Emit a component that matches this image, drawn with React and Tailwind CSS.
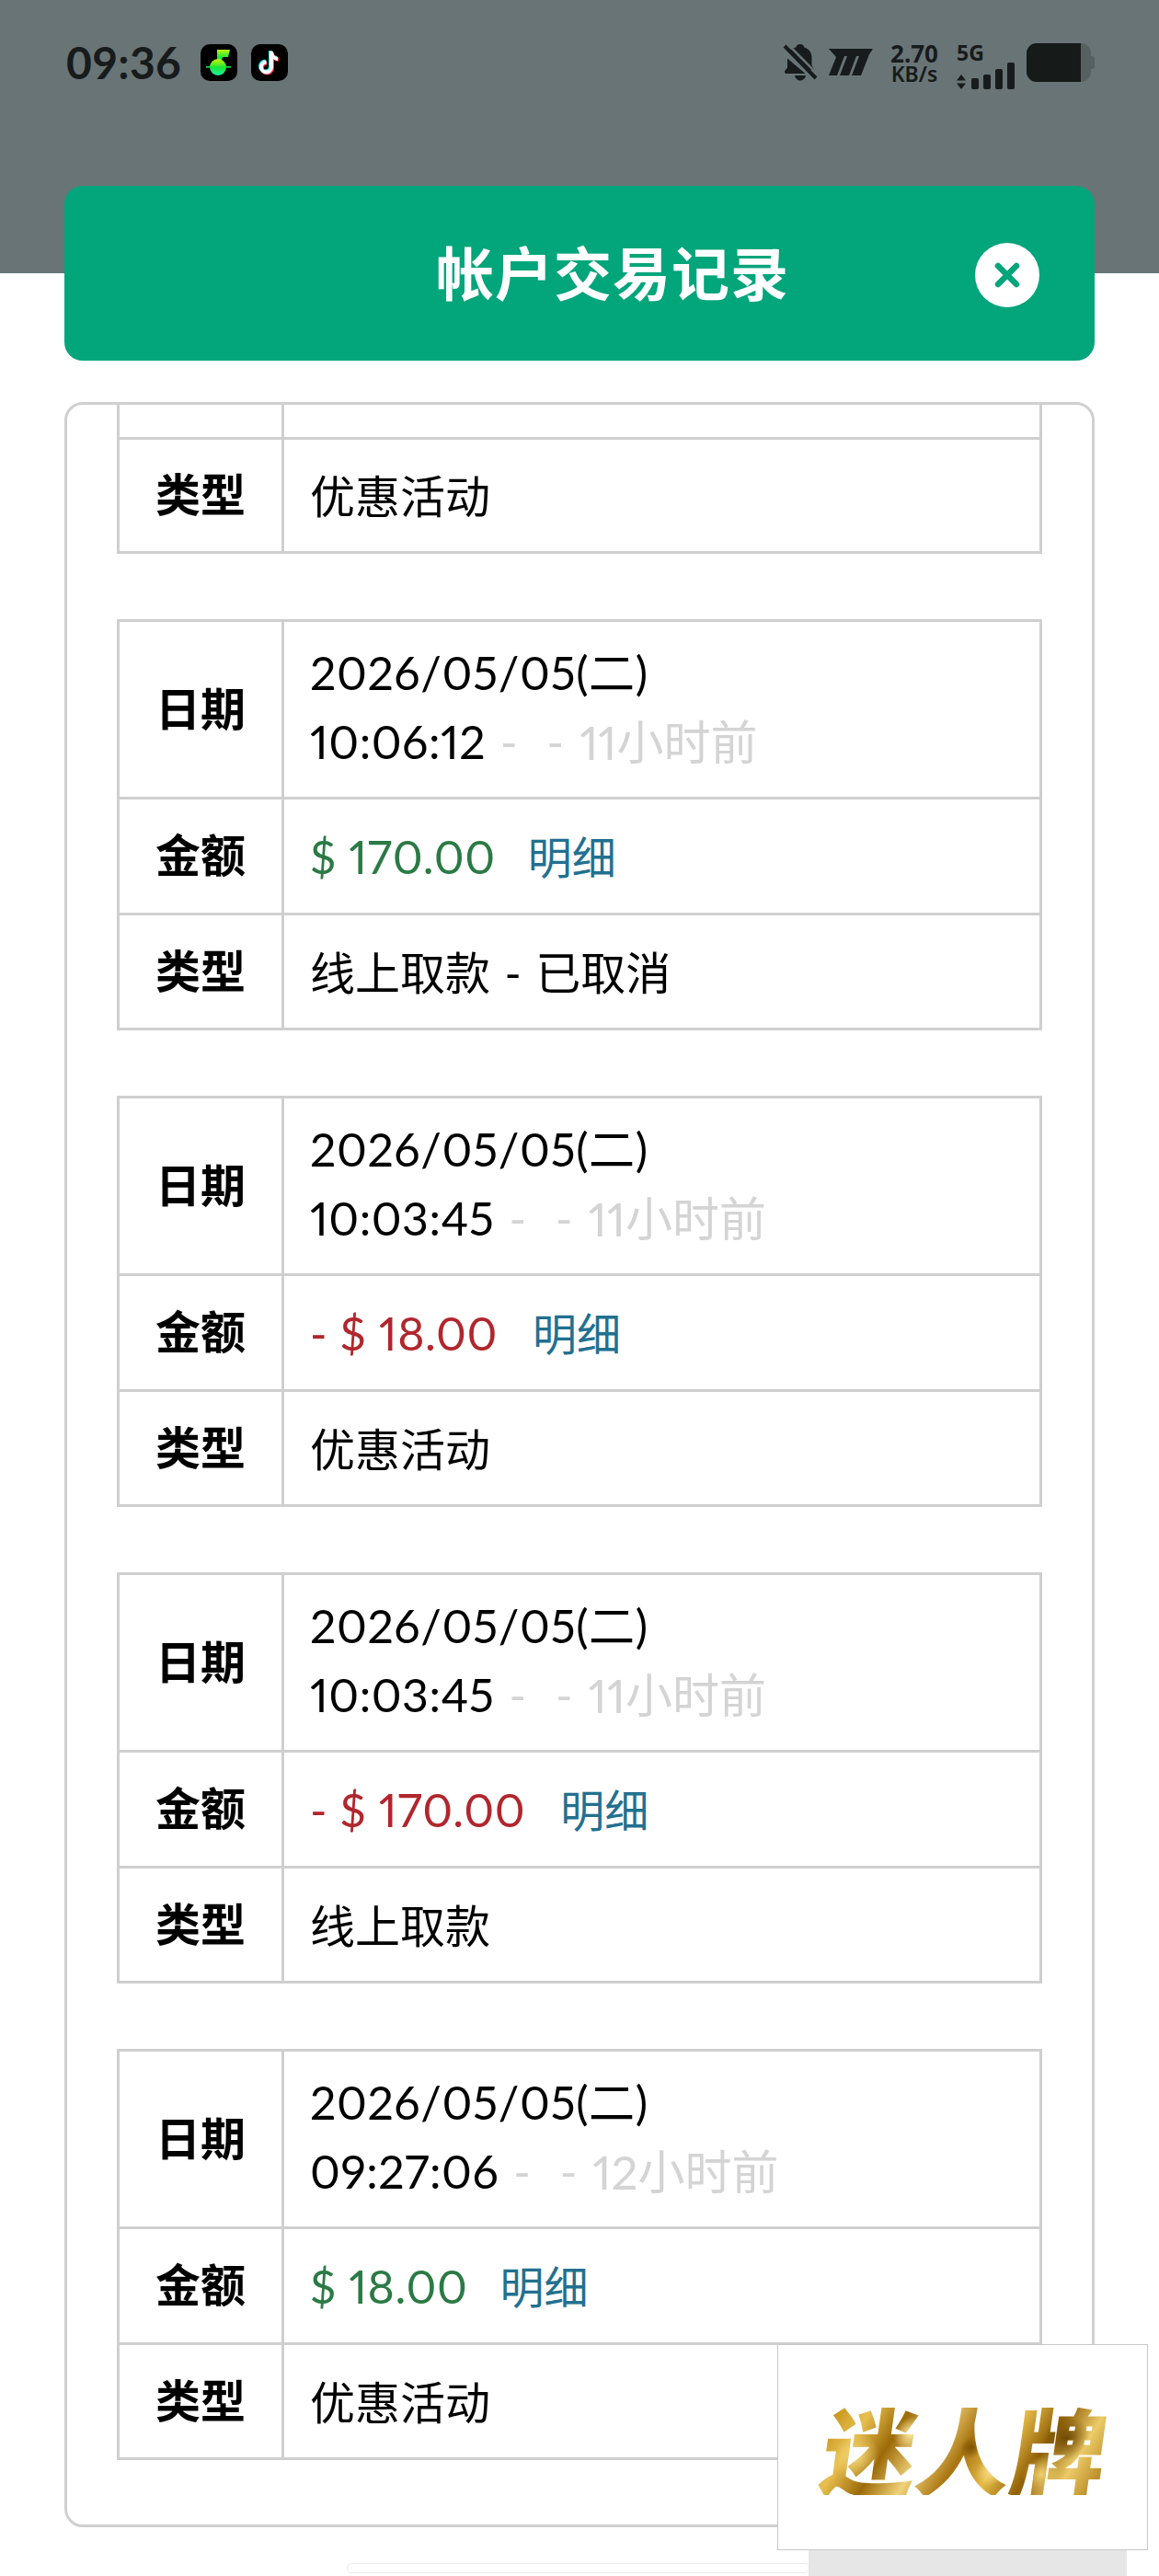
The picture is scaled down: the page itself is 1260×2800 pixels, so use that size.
import React from 'react';

const FONT = "font-['Lato','Noto_Sans_CJK_SC',sans-serif]";

const records = [
  { date: '2026/05/05(二)', time: '10:06:12', ago: '11小时前', amount: '$ 170.00', positive: true, type: '线上取款 - 已取消' },
  { date: '2026/05/05(二)', time: '10:03:45', ago: '11小时前', amount: '- $ 18.00', positive: false, type: '优惠活动' },
  { date: '2026/05/05(二)', time: '10:03:45', ago: '11小时前', amount: '- $ 170.00', positive: false, type: '线上取款' },
  { date: '2026/05/05(二)', time: '09:27:06', ago: '12小时前', amount: '$ 18.00', positive: true, type: '优惠活动' },
];

const MusicIcon = () => (
  <svg viewBox="0 0 40 40" className="h-10 w-10">
    <defs>
      <linearGradient id="musicGrad" x1="0" y1="0" x2="0" y2="1">
        <stop offset="0" stopColor="#c4f500" />
        <stop offset="0.55" stopColor="#18e83c" />
        <stop offset="1" stopColor="#1ff0a8" />
      </linearGradient>
    </defs>
    <rect width="40" height="40" rx="10" fill="#000" />
    <path d="M18 6h14l-2 8h-6l-2 7h-4z" fill="url(#musicGrad)" />
    <circle cx="19" cy="25" r="9" fill="url(#musicGrad)" />
    <rect x="6" y="24" width="27" height="1.6" fill="#18e83c" />
  </svg>
);

const TiktokIcon = () => (
  <svg viewBox="0 0 40 40" className="h-10 w-10">
    <rect width="40" height="40" rx="10" fill="#000" />
    <path d="M22 8v17a5.5 5.5 0 1 1-5.5-5.5M22 9c.5 4 3 6.5 7 7" fill="none" stroke="#25f4ee" strokeWidth="4" transform="translate(-1 -1)" />
    <path d="M22 8v17a5.5 5.5 0 1 1-5.5-5.5M22 9c.5 4 3 6.5 7 7" fill="none" stroke="#fe2c55" strokeWidth="4" transform="translate(1 1)" />
    <path d="M22 8v17a5.5 5.5 0 1 1-5.5-5.5M22 9c.5 4 3 6.5 7 7" fill="none" stroke="#fff" strokeWidth="4" />
  </svg>
);

const StatusBar = () => (
  <div className="flex items-start justify-between pl-[72px] pr-[70px] pt-[47px] text-[#171b1b]">
    <div className="flex items-center">
      <span className={`${FONT} w-[146px] text-[48px] leading-[41px] font-bold tracking-[0.3px]`}>09:36</span>
      <div className="flex gap-[15px]">
        <MusicIcon />
        <TiktokIcon />
      </div>
    </div>
    <div className="flex items-start font-['Noto_Sans',sans-serif]">
      <svg viewBox="0 0 40 42" className="h-[42px] w-10 fill-[#171b1b]">
        <path d="M20 1c2.4 0 4 1.6 4.300 3.400C30 6 32.500 10.500 32.500 16v8l3 5-6 0L8 8c2-2 4.500-3 7.200-3.600C15.800 2.600 17.600 1 20 1zM6 16.500 25.500 33H5c-1.800 0-2.600-2-1.500-3.300L6 26.500zM14 35h12c-.5 3-3 5.500-6 5.500S14.500 38 14 35z" />
        <path d="M3 3l34 35" stroke="#171b1b" strokeWidth="4" />
        <path d="M6.500 1 41 36" stroke="#697476" strokeWidth="2.500" />
      </svg>
      <svg viewBox="0 0 48 29" className="ml-[11px] mt-[6px] h-[29px] w-12 fill-[#171b1b]">
        <path d="M0 0h48l-4 6-9 23H25l8-21h-3l-8 21H12l8-21h-3L9 29H0L8 9z" />
      </svg>
      <div className="ml-5 flex w-[50px] flex-col items-center">
        <span className="text-[26px] leading-[22px] font-bold">2.70</span>
        <span className="mt-[1px] text-[23px] leading-[20px] font-semibold">KB/s</span>
      </div>
      <div className="ml-[21px] flex w-[64px] flex-col">
        <span className="text-[23px] leading-[20px] font-bold">5G</span>
        <div className="mt-[1px] flex items-end">
          <svg viewBox="0 0 10 16" className="h-4 w-[10px] fill-[#171b1b]">
            <path d="M5 0l5 6.500H0zM5 16l5-6.500H0z" />
          </svg>
          <div className="ml-[6px] flex items-end gap-[5px]">
            <div className="h-3 w-2 rounded-[2px] bg-[#171b1b]" />
            <div className="h-4 w-2 rounded-[2px] bg-[#171b1b]" />
            <div className="h-[22px] w-2 rounded-[2px] bg-[#171b1b]" />
            <div className="h-[29px] w-2 rounded-[2px] bg-[#171b1b]" />
          </div>
        </div>
      </div>
      <div className="ml-[12px] flex items-center">
        <div className="flex h-[42px] w-[70px] overflow-hidden rounded-[11px] bg-[#566060]">
          <div className="h-full w-[59px] bg-[#161a19]" />
        </div>
        <div className="h-[14px] w-1 rounded-r-[3px] bg-[#566060]" />
      </div>
    </div>
  </div>
);

const Header = () => (
  <div className="relative mx-[70px] -mt-[95px] flex h-[190px] items-center justify-center rounded-[20px] bg-[#03a57a] pb-[8px] pl-[72px]">
    <h1 className="font-['Noto_Sans_CJK_SC',sans-serif] text-[63px] leading-none font-semibold tracking-[1px] text-white">帐户交易记录</h1>
    <button className="absolute left-[990px] top-[62px] flex h-[70px] w-[70px] items-center justify-center rounded-full bg-white">
      <svg viewBox="0 0 30 30" className="h-[30px] w-[30px]">
        <path d="M5 5l20 20M25 5L5 25" stroke="#03a57a" strokeWidth="6.500" strokeLinecap="round" />
      </svg>
    </button>
  </div>
);

const Cell = ({ children, className = 'text-[50px]' }) => (
  <td className={`border-[3px] border-[#cfcfcf] pl-[28px] leading-[75px] text-black ${className}`}>{children}</td>
);

const Label = ({ children }) => (
  <td className="w-[179px] border-[3px] border-[#cfcfcf] text-center text-[49px] font-bold text-black">{children}</td>
);

const RecordTable = ({ record }) => (
  <table className={`${FONT} w-full border-collapse proportional-nums`}>
    <tbody>
      <tr className="h-[193px]">
        <Label>日期</Label>
        <Cell className="pb-[4px] text-[50px]">
          <div className="tracking-[0.6px]">{record.date}</div>
          <div className="flex">
            <span className="tracking-[0.5px]">{record.time}</span>
            <span className="ml-[16px] text-[#d4d4d4]">-</span>
            <span className="ml-[32px] text-[#d4d4d4]">-</span>
            <span className="ml-[17px] text-[51px] text-[#d4d4d4]">{record.ago}</span>
          </div>
        </Cell>
      </tr>
      <tr className="h-[126px]">
        <Label>金额</Label>
        <Cell className="pt-[3px] text-[50px]">
          <span className={`tracking-[0.6px] ${record.positive ? 'text-[#2b7a45]' : 'text-[#b0272d]'}`}>{record.amount}</span>
          <span className={`text-[48px] text-[#22708f] ${record.positive ? 'ml-[35px]' : 'ml-[38px]'}`}>明细</span>
        </Cell>
      </tr>
      <tr className="h-[125px]">
        <Label>类型</Label>
        <Cell className="pt-[3px] text-[49px] [word-spacing:3px]">{record.type}</Cell>
      </tr>
    </tbody>
  </table>
);

// first table is scrolled off the top of the panel, only its last row shows
const ScrolledRow = () => (
  <table className={`${FONT} w-full border-collapse`}>
    <tbody>
      <tr className="h-[36px]">
        <td className="w-[179px] border-[3px] border-t-0 border-[#cfcfcf]" />
        <td className="border-[3px] border-t-0 border-[#cfcfcf]" />
      </tr>
      <tr className="h-[124px]">
        <Label>类型</Label>
        <Cell className="pt-[3px] text-[49px]">优惠活动</Cell>
      </tr>
    </tbody>
  </table>
);

export default function App() {
  return (
    <div className="relative h-[2800px] overflow-hidden bg-white">
      <div className="h-[297px] bg-[#697476]">
        <StatusBar />
      </div>
      <Header />
      <div className="mx-[70px] mt-[45px] h-[2310px] overflow-hidden rounded-[20px] border-[3px] border-[#d0d0d0] px-[54px]">
        <ScrolledRow />
        <div className="mt-[71px] flex flex-col gap-[71px]">
          {records.map((record, i) => (
            <RecordTable key={i} record={record} />
          ))}
        </div>
      </div>

      <div className="absolute left-[377px] top-[2786px] h-[11px] w-[503px] rounded-[5px] border border-[#ececec] bg-white" />
      <div className="absolute left-[879px] top-[2772px] h-[28px] w-[346px] bg-[#e6e6e6]" />
      <div className="absolute left-[845px] top-[2548px] flex h-[224px] w-[403px] items-center justify-center border border-[#c8c8c8] bg-white pl-[6px]">
        <span className="-skew-x-[8deg] bg-[radial-gradient(circle_at_12%_60%,#f4d778_0%,transparent_9%),radial-gradient(circle_at_30%_35%,#ffe9a0_0%,transparent_8%),radial-gradient(circle_at_52%_50%,#7d5204_0%,transparent_7%),radial-gradient(circle_at_60%_75%,#f6dc84_0%,transparent_8%),radial-gradient(circle_at_85%_40%,#6f4903_0%,transparent_9%),radial-gradient(circle_at_78%_78%,#f0cf6c_0%,transparent_8%),linear-gradient(115deg,#b8860b_0%,#e8c050_14%,#9c6a08_26%,#f0d27a_38%,#a87410_50%,#e6bb48_62%,#8f6006_74%,#eccb68_86%,#a8750f_100%)] bg-clip-text font-['Noto_Sans_CJK_SC',sans-serif] text-[103px] leading-none font-black text-transparent">迷人牌</span>
      </div>
    </div>
  );
}
